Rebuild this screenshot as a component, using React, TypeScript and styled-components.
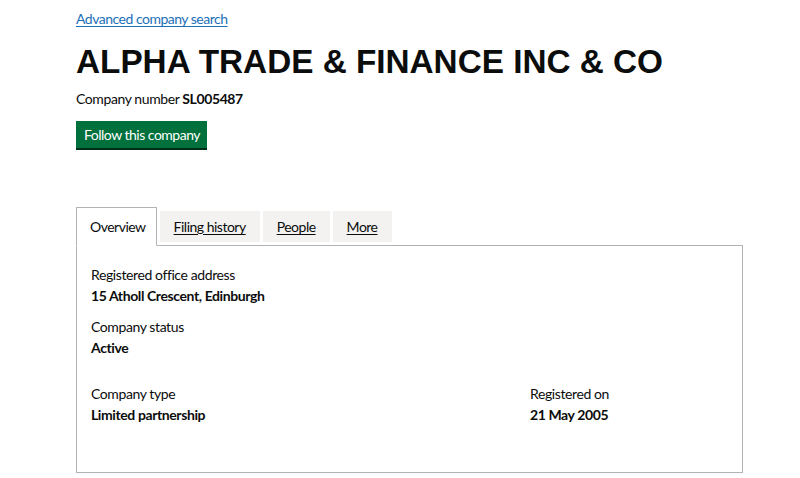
import React from "react";
import styled, { createGlobalStyle } from "styled-components";

const Global = createGlobalStyle`
  html, body { margin: 0; padding: 0; background: #ffffff; }
  body { font-family: "Lato", "Liberation Sans", sans-serif; color: #0b0c0c; letter-spacing: -0.4px; }
  * { box-sizing: border-box; }
`;

const Page = styled.div`
  width: 800px;
  padding: 8px 57px 0 76px;
`;

const SearchLink = styled.a`
  display: inline-block;
  font-size: 14px;
  line-height: 18px;
  color: #1d70b8;
  letter-spacing: -0.5px;
  text-decoration: underline;
  text-underline-offset: 2px;
`;

const Heading = styled.h1`
  margin: 16px 0 0;
  font-family: "Liberation Sans", Arial, sans-serif;
  font-weight: 700;
  font-size: 33.3px;
  line-height: 36px;
  letter-spacing: 0;
`;

const CompanyNumber = styled.p`
  margin: 10px 0 0;
  font-size: 14px;
  line-height: 18px;
  strong { font-weight: 700; }
`;

const FollowButton = styled.button`
  margin-top: 13px;
  display: block;
  height: 27px;
  padding: 0 7px 0 8px;
  border: 0;
  background: #00703c;
  color: #ffffff;
  font-family: inherit;
  letter-spacing: -0.5px;
  font-size: 14px;
  box-shadow: 0 2px 0 #002d18;
`;

const Tabs = styled.div`
  margin-top: 59px;
`;

const TabList = styled.div`
  display: flex;
  align-items: flex-start;
  gap: 3px;
  position: relative;
  z-index: 1;
  margin-bottom: -1px;
`;

const Tab = styled.a<{ $active?: boolean }>`
  display: flex;
  align-items: center;
  font-size: 14px;
  color: #0b0c0c;
  letter-spacing: -0.5px;
  height: ${(p) => (p.$active ? "39px" : "31px")};
  margin-top: ${(p) => (p.$active ? "0" : "4px")};
  padding: ${(p) => (p.$active ? "0 10px 0 13px" : "0 14px")};
  background: ${(p) => (p.$active ? "#ffffff" : "#f3f2f1")};
  border: ${(p) => (p.$active ? "1px solid #b1b4b6" : "none")};
  border-bottom: ${(p) => (p.$active ? "1px solid #ffffff" : "none")};
  text-decoration: ${(p) => (p.$active ? "none" : "underline")};
  text-underline-offset: 2px;
`;

const Panel = styled.div`
  border: 1px solid #b1b4b6;
  height: 228px;
  padding: 19px 14px;
`;

const Field = styled.div`
  margin-bottom: 11px;
`;

const Label = styled.div`
  font-size: 14px;
  line-height: 20px;
`;

const Value = styled.div`
  font-size: 14px;
  line-height: 21px;
  font-weight: 700;
`;

const Row = styled.div`
  display: grid;
  grid-template-columns: 439px 1fr;
  margin-top: 26px;
`;

export default function App() {
  return (
    <>
      <Global />
      <Page>
        <SearchLink href="#">Advanced company search</SearchLink>
        <Heading>ALPHA TRADE &amp; FINANCE INC &amp; CO</Heading>
        <CompanyNumber>
          Company number <strong>SL005487</strong>
        </CompanyNumber>
        <FollowButton>Follow this company</FollowButton>
        <Tabs>
          <TabList>
            <Tab $active>Overview</Tab>
            <Tab href="#">Filing history</Tab>
            <Tab href="#">People</Tab>
            <Tab href="#">More</Tab>
          </TabList>
          <Panel>
            <Field>
              <Label>Registered office address</Label>
              <Value>15 Atholl Crescent, Edinburgh</Value>
            </Field>
            <Field>
              <Label>Company status</Label>
              <Value>Active</Value>
            </Field>
            <Row>
              <Field>
                <Label>Company type</Label>
                <Value>Limited partnership</Value>
              </Field>
              <Field>
                <Label>Registered on</Label>
                <Value>21 May 2005</Value>
              </Field>
            </Row>
          </Panel>
        </Tabs>
      </Page>
    </>
  );
}
